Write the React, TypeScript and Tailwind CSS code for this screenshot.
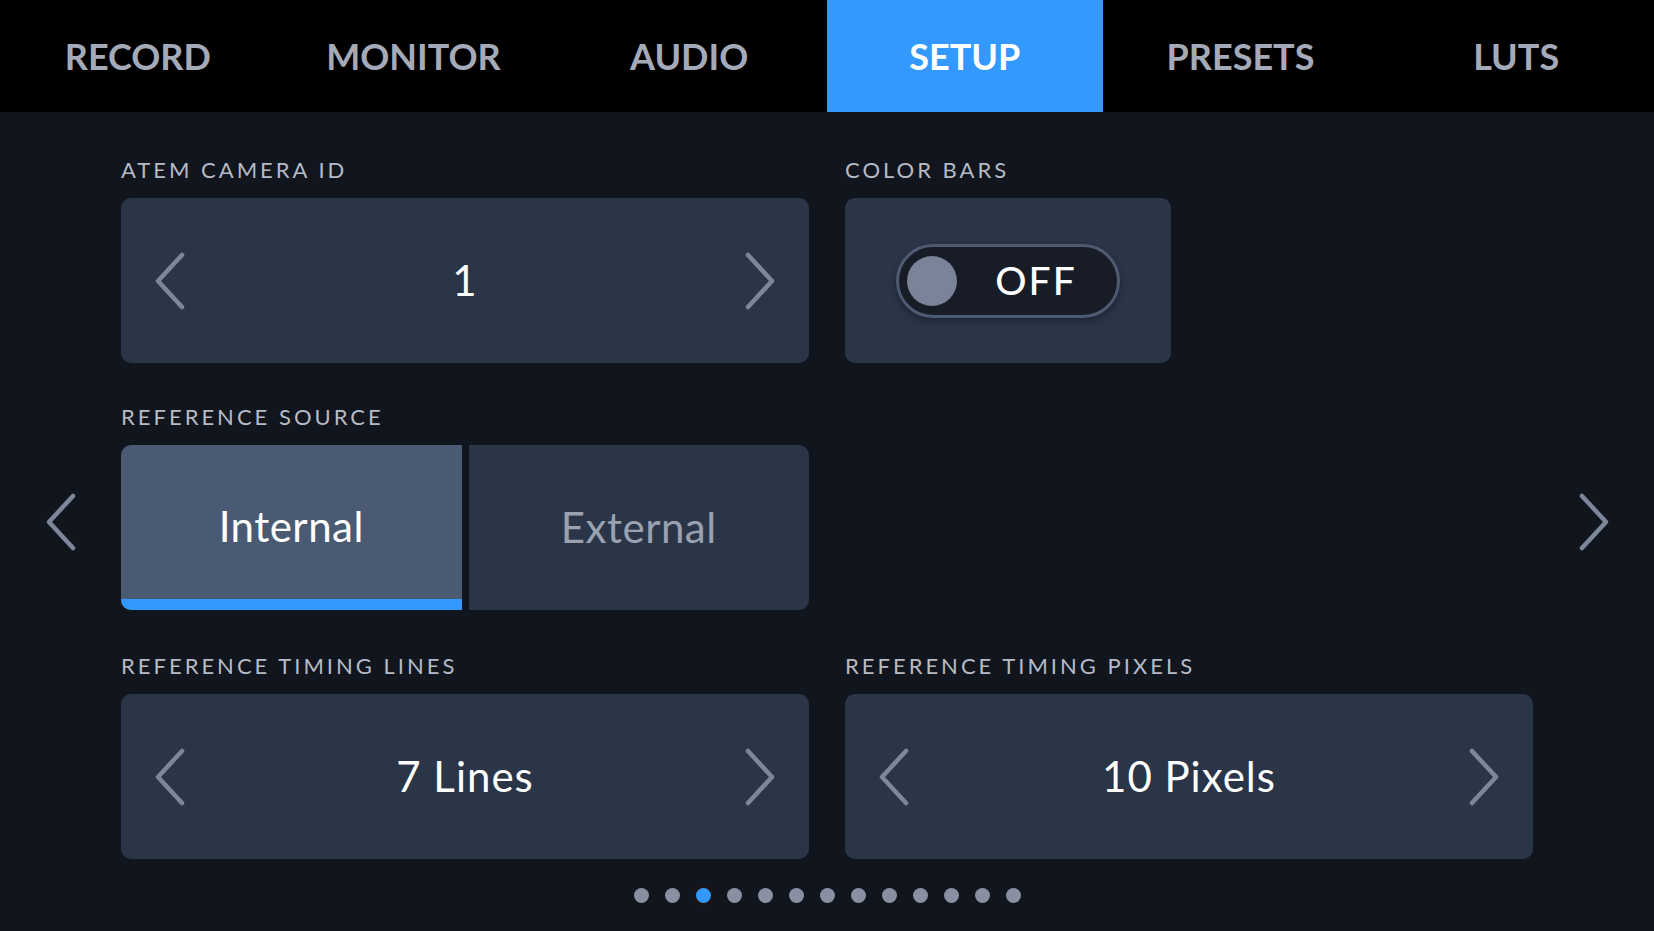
import React from 'react';

const tabs = ['RECORD', 'MONITOR', 'AUDIO', 'SETUP', 'PRESETS', 'LUTS'];

function Chevron({ dir, className }: { dir: 'left' | 'right'; className?: string }) {
  return (
    <svg viewBox="0 0 32 58" className={className} fill="none">
      <path
        d={dir === 'left' ? 'M28 3 L4 29 L28 55' : 'M4 3 L28 29 L4 55'}
        stroke="#7d879a"
        strokeWidth="4.5"
        strokeLinecap="round"
        strokeLinejoin="round"
      />
    </svg>
  );
}

function Label({ children }: { children: React.ReactNode }) {
  return (
    <div className="h-[26px] leading-[26px] mb-[15px] text-[22px] tracking-[3px] text-[#b6bbc6] whitespace-nowrap">
      {children}
    </div>
  );
}

function Stepper({ value }: { value: string }) {
  return (
    <div className="h-[165px] rounded-[10px] bg-[#2a3548] flex items-center justify-between px-[33px]">
      <Chevron dir="left" className="w-[32px] h-[58px]" />
      <div className="text-[42px] text-white tracking-[1px]">{value}</div>
      <Chevron dir="right" className="w-[32px] h-[58px]" />
    </div>
  );
}

export default function App() {
  return (
    <div
      className="w-[1654px] h-[931px] bg-[#10151e] flex flex-col overflow-hidden"
      style={{ fontFamily: 'Lato, "Open Sans", sans-serif' }}
    >
      <div className="h-[112px] bg-black grid grid-cols-6 shrink-0">
        {tabs.map((t) => (
          <div
            key={t}
            className={`flex items-center justify-center text-[36px] font-bold ${
              t === 'SETUP' ? 'bg-[#3399ff] text-white' : 'text-[#a4aab8]'
            }`}
          >
            {t}
          </div>
        ))}
      </div>

      <div className="flex-1 flex">
        <div className="w-[121px] flex items-center justify-center">
          <Chevron dir="left" className="w-[32px] h-[58px]" />
        </div>

        <div className="w-[1412px] pt-[45px] flex flex-col">
          <div className="grid grid-cols-2 gap-x-[36px]">
            <div>
              <Label>ATEM CAMERA ID</Label>
              <Stepper value="1" />
            </div>
            <div>
              <Label>COLOR BARS</Label>
              <div className="w-[326px] h-[165px] rounded-[10px] bg-[#2a3548] flex items-center justify-center">
                <div className="w-[224px] h-[74px] rounded-full border-[3px] border-[#4d5a72] bg-[#171c27] flex items-center pl-[8px] shadow-[0_3px_6px_rgba(0,0,0,0.35)]">
                  <div className="w-[50px] h-[50px] rounded-full bg-[#7a8397]" />
                  <div className="flex-1 text-center text-[39px] font-medium text-white tracking-[2px] pr-[2px]">OFF</div>
                </div>
              </div>
            </div>
          </div>

          <div className="grid grid-cols-2 gap-x-[36px] mt-[41px]">
            <div>
              <Label>REFERENCE SOURCE</Label>
              <div className="h-[165px] flex gap-[7px]">
                <div className="flex-1 rounded-l-[10px] bg-[#4b5a73] flex flex-col overflow-hidden">
                  <div className="flex-1 flex items-center justify-center text-[42px] text-white tracking-[0.5px] pt-[8px]">
                    Internal
                  </div>
                  <div className="h-[11px] bg-[#3399ff]" />
                </div>
                <div className="flex-1 rounded-r-[10px] bg-[#2a3548] flex items-center justify-center text-[42px] text-[#9aa1b0] tracking-[0.5px]">
                  External
                </div>
              </div>
            </div>
            <div />
          </div>

          <div className="grid grid-cols-2 gap-x-[36px] mt-[43px]">
            <div>
              <Label>REFERENCE TIMING LINES</Label>
              <Stepper value="7 Lines" />
            </div>
            <div>
              <Label>REFERENCE TIMING PIXELS</Label>
              <Stepper value="10 Pixels" />
            </div>
          </div>

          <div className="mt-[29px] flex justify-center gap-[16px]">
            {Array.from({ length: 13 }).map((_, i) => (
              <div
                key={i}
                className={`w-[15px] h-[15px] rounded-full ${
                  i === 2 ? 'bg-[#3399ff] shadow-[0_0_0_3px_#1a1512]' : 'bg-[#8990a2]'
                }`}
              />
            ))}
          </div>
        </div>

        <div className="w-[121px] flex items-center justify-center">
          <Chevron dir="right" className="w-[32px] h-[58px]" />
        </div>
      </div>
    </div>
  );
}
